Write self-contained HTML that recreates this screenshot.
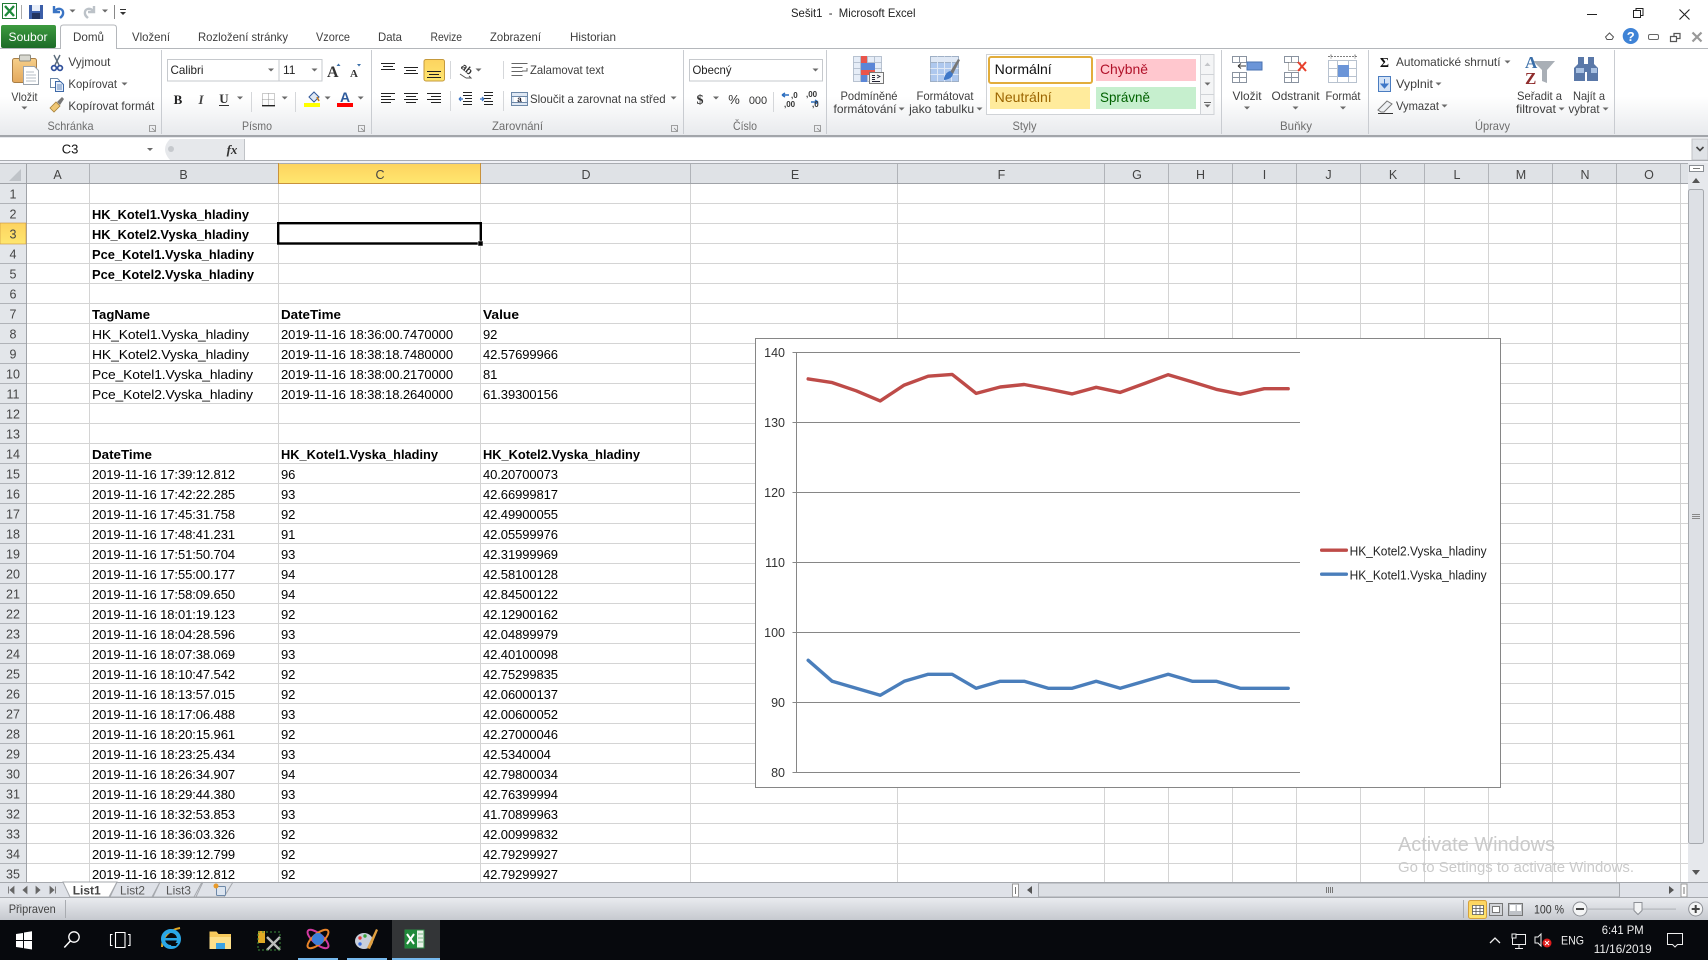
<!DOCTYPE html>
<html lang="cs"><head><meta charset="utf-8"><title>Sešit1 - Microsoft Excel</title>
<style>
html,body{margin:0;padding:0;background:#fff;width:1708px;height:960px;overflow:hidden}
svg{display:block;font-family:"Liberation Sans",sans-serif}
.u{font-size:12px;fill:#3e3e3e}
.gl{font-size:12px;fill:#6d6d6d;text-anchor:middle}
.m{text-anchor:middle}
.c{font-size:13px;fill:#000;letter-spacing:-.09px}
.b{font-size:13px;fill:#000;font-weight:bold}
.rn{font-size:12.5px;fill:#444;text-anchor:middle}
.ch{font-size:12.5px;fill:#444;text-anchor:middle}
.ax{font-size:12.5px;fill:#333;text-anchor:end}
.tb{font-size:12px;fill:#eee}
</style></head><body>
<svg width="1708" height="960" viewBox="0 0 1708 960" xmlns="http://www.w3.org/2000/svg">
<defs>
<linearGradient id="rib" x1="0" y1="0" x2="0" y2="1"><stop offset="0" stop-color="#fff"/><stop offset=".55" stop-color="#fff"/><stop offset="1" stop-color="#e8eaed"/></linearGradient>
<linearGradient id="grn" x1="0" y1="0" x2="0" y2="1"><stop offset="0" stop-color="#3d9a3f"/><stop offset="1" stop-color="#1c6b27"/></linearGradient>
<linearGradient id="gold" x1="0" y1="0" x2="0" y2="1"><stop offset="0" stop-color="#fdd35f"/><stop offset="1" stop-color="#fee66f"/></linearGradient>
<linearGradient id="stat" x1="0" y1="0" x2="0" y2="1"><stop offset="0" stop-color="#e9ebef"/><stop offset="1" stop-color="#c6c9cf"/></linearGradient>
<linearGradient id="clip" x1="0" y1="0" x2="0" y2="1"><stop offset="0" stop-color="#f6cf8a"/><stop offset="1" stop-color="#e3a85c"/></linearGradient>
<path id="ar" d="M-3-1.5h6l-3 3z" fill="#6a6a6a"/>
</defs>

<!-- title bar -->
<rect width="1708" height="48" fill="#fff"/>
<rect x="2.5" y="3.5" width="14" height="15" fill="#fff" stroke="#1f7a33"/>
<path d="M5 6l9 10M14 6l-9 10" stroke="#1f8a3a" stroke-width="2.4"/>
<rect x="21" y="5" width="1" height="14" fill="#aaa"/>
<rect x="29" y="5" width="14" height="14" fill="#3b5ea8"/><rect x="32" y="5" width="8" height="6" fill="#e8eef8"/><rect x="32" y="13" width="8" height="6" fill="#22335e"/>
<path d="M54 6v6h6M54 12c3-5 10-4 9 2-.3 2-2 3-3 4" fill="none" stroke="#3a74c4" stroke-width="2.4"/>
<use href="#ar" x="72.5" y="11"/>
<path d="M94 6v6h-6M94 12c-3-5-10-4-9 2 .3 2 2 3 3 4" fill="none" stroke="#bcc2c8" stroke-width="2.4"/>
<use href="#ar" x="105" y="11"/>
<rect x="114" y="5" width="1" height="14" fill="#888"/>
<path d="M120 9h6v1h-6zM120 12h6l-3 3z" fill="#333"/>
<text x="791" y="17" class="u" style="fill:#222;white-space:pre" textLength="124.5" lengthAdjust="spacingAndGlyphs">Sešit1  -  Microsoft Excel</text>
<rect x="1587" y="14" width="10" height="1" fill="#222"/>
<path d="M1633.5 10.5h7v7h-7zM1636 10.5v-2h7v7h-2" fill="none" stroke="#222"/>
<path d="M1679.5 9.5l10 10M1689.5 9.5l-10 10" stroke="#222" stroke-width="1.1"/>

<!-- tabs -->
<rect x="1" y="25" width="55" height="23" rx="2" fill="url(#grn)"/>
<text x="28" y="41" class="m" style="font-size:12px;fill:#fff" textLength="39" lengthAdjust="spacingAndGlyphs">Soubor</text>
<path d="M60.5 49v-21q0-3 3-3h50q3 0 3 3v21" fill="#fff" stroke="#b4b7bb"/>
<g class="u">
<text x="73" y="41" textLength="31" lengthAdjust="spacingAndGlyphs">Domů</text>
<text x="132" y="41" textLength="38" lengthAdjust="spacingAndGlyphs">Vložení</text>
<text x="198" y="41" textLength="90" lengthAdjust="spacingAndGlyphs">Rozložení stránky</text>
<text x="316" y="41" textLength="34" lengthAdjust="spacingAndGlyphs">Vzorce</text>
<text x="378" y="41" textLength="24" lengthAdjust="spacingAndGlyphs">Data</text>
<text x="430.5" y="41" textLength="31.5" lengthAdjust="spacingAndGlyphs">Revize</text>
<text x="490" y="41" textLength="51" lengthAdjust="spacingAndGlyphs">Zobrazení</text>
<text x="570" y="41" textLength="46" lengthAdjust="spacingAndGlyphs">Historian</text>
</g>
<path d="M1605.5 37l4-4 4 4-1.5 2.5h-5z" fill="none" stroke="#555"/>
<circle cx="1630.7" cy="36" r="8" fill="#3f83d6"/>
<text x="1630.7" y="41" class="m" style="font-size:13px;font-weight:bold;fill:#fff">?</text>
<rect x="1648.5" y="34.5" width="10" height="5" rx="1.5" fill="none" stroke="#666"/>
<path d="M1670.5 36.5h6v5h-6zM1674 36.5v-3h6v5h-3" fill="none" stroke="#555" stroke-width="1.2"/>
<path d="M1692.5 32.5l9 9M1701.5 32.5l-9 9" stroke="#999" stroke-width="2.2"/>

<!-- ribbon -->
<rect x="0" y="49" width="1708" height="86" fill="url(#rib)"/>
<rect x="0" y="48" width="60" height="1" fill="#b4b7bb"/><rect x="117" y="48" width="1591" height="1" fill="#b4b7bb"/>
<rect x="61" y="48" width="55" height="2" fill="#fff"/>
<g fill="#c9ccd1">
<rect x="161" y="50" width="1" height="84"/><rect x="371" y="50" width="1" height="84"/><rect x="683" y="50" width="1" height="84"/><rect x="826" y="50" width="1" height="84"/><rect x="1221" y="50" width="1" height="84"/><rect x="1368" y="50" width="1" height="84"/><rect x="1614" y="50" width="1" height="84"/>
</g>
<g class="gl">
<text x="70.5" y="130" textLength="46" lengthAdjust="spacingAndGlyphs">Schránka</text>
<text x="257" y="130" textLength="30" lengthAdjust="spacingAndGlyphs">Písmo</text>
<text x="517.5" y="130" textLength="51" lengthAdjust="spacingAndGlyphs">Zarovnání</text>
<text x="745" y="130" textLength="24" lengthAdjust="spacingAndGlyphs">Číslo</text>
<text x="1024.5" y="130" textLength="24" lengthAdjust="spacingAndGlyphs">Styly</text>
<text x="1296" y="130" textLength="32" lengthAdjust="spacingAndGlyphs">Buňky</text>
<text x="1492.5" y="130" textLength="35" lengthAdjust="spacingAndGlyphs">Úpravy</text>
</g>
<g fill="none" stroke="#888" stroke-width=".8">
<path d="M149.5 125.5h6v6h-6zM152 128l3 3"/><path d="M358.5 125.5h6v6h-6zM361 128l3 3"/><path d="M671.5 125.5h6v6h-6zM674 128l3 3"/><path d="M814.5 125.5h6v6h-6zM817 128l3 3"/>
</g>

<!-- clipboard -->
<rect x="12.5" y="58.5" width="24" height="24" rx="2" fill="url(#clip)" stroke="#a87e46"/>
<rect x="19.5" y="55" width="11" height="6" rx="1" fill="#d8d8d0" stroke="#8a8a80"/>
<path d="M23.5 66.5h11l4 4v14h-15z" fill="#fff" stroke="#9aa3ad"/>
<path d="M26 72h8M26 75h10M26 78h10M26 81h10" stroke="#b5bcc6"/>
<text x="24.4" y="101" class="u m" textLength="26" lengthAdjust="spacingAndGlyphs">Vložit</text>
<use href="#ar" x="24.4" y="108"/>
<path d="M54 55l5 10M60 55l-5 10" stroke="#5a6a7a" stroke-width="1.4"/>
<circle cx="54" cy="68" r="2.4" fill="none" stroke="#2f4f9a" stroke-width="1.7"/><circle cx="60" cy="68" r="2.4" fill="none" stroke="#2f4f9a" stroke-width="1.7"/>
<text x="68.4" y="66" class="u" textLength="42" lengthAdjust="spacingAndGlyphs">Vyjmout</text>
<path d="M50.5 78.5h7l2 2v7h-9z" fill="#fff" stroke="#6d88a8"/>
<path d="M55.5 81.5h5l3 3v7h-8z" fill="#e6eefa" stroke="#3e69a8"/>
<path d="M57 85h5M57 87h5M57 89h5" stroke="#3e69a8" stroke-width=".8"/>
<text x="68.4" y="88" class="u" textLength="48.6" lengthAdjust="spacingAndGlyphs">Kopírovat</text>
<use href="#ar" x="124.5" y="84"/>
<path d="M50 108l6-6 4 4-6 6z" fill="#efc775" stroke="#a68038" stroke-width=".8"/>
<path d="M57 102l5-5 2 2-4 6z" fill="#777"/>
<text x="68.4" y="110" class="u" textLength="86" lengthAdjust="spacingAndGlyphs">Kopírovat formát</text>

<!-- font -->
<rect x="167.5" y="59.5" width="111.5" height="21.5" fill="#fff" stroke="#c6c9cd"/>
<rect x="279" y="59.5" width="43" height="21.5" fill="#fff" stroke="#c6c9cd"/>
<text x="170.5" y="74" class="u" style="fill:#222" textLength="33" lengthAdjust="spacingAndGlyphs">Calibri</text>
<text x="283" y="74" class="u" style="fill:#222">11</text>
<use href="#ar" x="271" y="70"/><use href="#ar" x="314.5" y="70"/>
<text x="327" y="77" style="font-size:16px;font-weight:bold;fill:#333;font-family:'Liberation Serif',serif">A</text>
<path d="M336.5 66l2-2.5 2 2.5z" fill="#3a6ea8"/>
<text x="350" y="77" style="font-size:11px;font-weight:bold;fill:#333;font-family:'Liberation Serif',serif">A</text>
<path d="M357 64l2 2.5 2-2.5z" fill="#3a6ea8"/>
<text x="178" y="104" class="m" style="font-size:13px;font-weight:bold;fill:#222;font-family:'Liberation Serif',serif">B</text>
<text x="201" y="104" class="m" style="font-size:13px;font-style:italic;font-weight:bold;fill:#444;font-family:'Liberation Serif',serif">I</text>
<text x="224" y="103" class="m" style="font-size:13px;font-weight:bold;fill:#333;font-family:'Liberation Serif',serif">U</text>
<rect x="219" y="105" width="10" height="1" fill="#333"/>
<use href="#ar" x="240" y="98"/>
<rect x="251" y="92" width="1" height="20" fill="#d5d7da"/>
<path d="M262.5 93.5h12v12h-12zM268.5 93.5v12M262.5 99.5h12" fill="none" stroke="#999" stroke-dasharray="1 1"/><rect x="262" y="105" width="13" height="1.4" fill="#222"/>
<use href="#ar" x="284.7" y="98"/>
<rect x="295" y="92" width="1" height="20" fill="#d5d7da"/>
<path d="M309 97l5-5 5 5-5 5z" fill="#dfe8f4" stroke="#33599a"/><path d="M317 97l2 4" stroke="#c07a20" stroke-width="1.6" fill="none"/>
<rect x="304" y="103" width="16" height="4" fill="#ff0"/>
<text x="345" y="102" class="m" style="font-size:14px;font-weight:bold;fill:#2d5a9c">A</text>
<rect x="337" y="103" width="16" height="4" fill="#f00"/>
<use href="#ar" x="327.6" y="98"/><use href="#ar" x="360.7" y="98"/>

<!-- alignment -->
<g stroke="#222" stroke-width="1">
<path d="M381 63.5h14M383 66.5h10M381 69.5h14"/>
<path d="M404 67.5h14M406 70.5h10M404 73.5h14"/>
<rect x="424" y="59.5" width="20.5" height="21.5" rx="2" fill="url(#gold)" stroke="#c59a3c"/>
<path d="M427 71.5h14M429 74.5h10M427 77.5h14"/>
<path d="M381 93.5h14M381 96.5h10M381 99.5h14M381 102.5h10"/>
<path d="M404 93.5h14M406 96.5h10M404 99.5h14M406 102.5h10"/>
<path d="M427 93.5h14M431 96.5h10M427 99.5h14M431 102.5h10"/>
<path d="M463 95.5h9M465 98.5h7M463 101.5h9M463 104.5h9M463 92.5h9"/>
<path d="M484 95.5h9M484 98.5h7M484 101.5h9M484 104.5h9M484 92.5h9"/>
</g>
<path d="M459 99h4M459 99l2-2M459 99l2 2" stroke="#3a74c4" stroke-width="1.2" fill="none"/>
<path d="M484 99h-4M484 99l-2-2M484 99l-2 2" stroke="#3a74c4" stroke-width="1.2" fill="none"/>
<rect x="450" y="61" width="1" height="18" fill="#d5d7da"/><rect x="450" y="91" width="1" height="20" fill="#d5d7da"/>
<text x="466" y="72" class="m" transform="rotate(40 466 70)" style="font-size:10px;font-weight:bold;fill:#333">ab</text>
<path d="M460 74l6 4M466 78h5l-2-2" stroke="#555" fill="none"/>
<use href="#ar" x="478.5" y="70"/>
<rect x="503" y="61" width="1" height="18" fill="#d5d7da"/><rect x="503" y="91" width="1" height="20" fill="#d5d7da"/>
<path d="M511.5 63.5h16M511.5 67.5h11M511.5 71.5h11M511.5 75.5h11M522 71h5v-3" fill="none" stroke="#666"/>
<text x="530" y="74" class="u" textLength="74" lengthAdjust="spacingAndGlyphs">Zalamovat text</text>
<rect x="511.5" y="92.5" width="16" height="13" fill="#dfe8f4" stroke="#6d88a8"/><path d="M511.5 96.5h16M511.5 102.5h16" stroke="#6d88a8"/><rect x="514" y="97" width="11" height="5" fill="#fff"/><text x="519.5" y="102" class="m" style="font-size:8px;font-weight:bold;fill:#223">a</text>
<text x="530" y="103" class="u" textLength="135.6" lengthAdjust="spacingAndGlyphs">Sloučit a zarovnat na střed</text>
<use href="#ar" x="673.6" y="98"/>

<!-- number -->
<rect x="689.5" y="59.5" width="133" height="21.5" fill="#fff" stroke="#c6c9cd"/>
<text x="692.5" y="74" class="u" style="fill:#222" textLength="39" lengthAdjust="spacingAndGlyphs">Obecný</text>
<use href="#ar" x="815.5" y="70"/>
<text x="700" y="104" class="m" style="font-size:14px;font-weight:bold;fill:#333;font-family:'Liberation Serif',serif">$</text>
<use href="#ar" x="716" y="98"/>
<text x="734" y="104" class="m" style="font-size:13px;fill:#333">%</text>
<text x="758" y="104" class="m" style="font-size:11px;fill:#333">000</text>
<rect x="773" y="92" width="1" height="20" fill="#d5d7da"/>
<path d="M782 95h7M782 95l3-2M782 95l3 2" stroke="#2d6fc0" stroke-width="1.4" fill="none"/>
<text x="791" y="98" style="font-size:8px;fill:#333;font-weight:bold">,0</text><text x="784" y="107" style="font-size:8px;fill:#333;font-weight:bold">,00</text>
<path d="M811 102h7M818 102l-3-2M818 102l-3 2" stroke="#2d6fc0" stroke-width="1.4" fill="none"/>
<text x="806" y="97" style="font-size:8px;fill:#333;font-weight:bold">,00</text><text x="812" y="107" style="font-size:8px;fill:#333;font-weight:bold">,0</text>

<!-- conditional format / table -->
<g stroke="#a9b5c6" stroke-width=".8">
<rect x="853.5" y="56.5" width="28" height="25" fill="#e6edf7"/>
<path d="M860.5 56.5v25M867.5 56.5v25M874.5 56.5v25M853.5 62.5h28M853.5 68.5h28M853.5 74.5h28" fill="none"/>
</g>
<rect x="861" y="56" width="6" height="7" fill="#e9554b"/><rect x="861" y="63" width="14" height="7" fill="#5b86d6"/><rect x="861" y="70" width="14" height="5" fill="#e9554b"/><rect x="861" y="75" width="6" height="7" fill="#5b86d6"/>
<rect x="869.5" y="72.5" width="14" height="11" fill="#f7f7f7" stroke="#777"/>
<path d="M872 75.5h3M872 77.5h3M872 79.5h3M872 81.5h8M877 75l3 1.5-3 1.5" stroke="#223" fill="none" stroke-width=".9"/>
<g class="u m">
<text x="869" y="100" textLength="57" lengthAdjust="spacingAndGlyphs">Podmíněné</text>
<text x="865" y="113" textLength="63" lengthAdjust="spacingAndGlyphs">formátování</text>
<text x="945" y="100" textLength="57" lengthAdjust="spacingAndGlyphs">Formátovat</text>
<text x="941.6" y="113" textLength="65" lengthAdjust="spacingAndGlyphs">jako tabulku</text>
</g>
<use href="#ar" x="901.6" y="109"/><use href="#ar" x="979.5" y="109"/>
<rect x="930.5" y="56.5" width="28" height="25" fill="#aec8ee" stroke="#9fb0c6"/>
<rect x="930.5" y="56.5" width="28" height="6" fill="#dfe8f5" stroke="#9fb0c6"/>
<path d="M937.5 56.5v25M944.5 56.5v25M951.5 56.5v25M930.5 68.5h28M930.5 74.5h28" stroke="#dfe8f5" fill="none"/>
<path d="M950 72l8-13 2 1-7 14z" fill="#777"/><path d="M944 78q2-6 6-7l3 3q-1 5-9 6z" fill="#3f78c8"/>

<!-- styles -->
<rect x="986.5" y="54.5" width="227" height="60" fill="#fff" stroke="#d0d3d7"/>
<rect x="989" y="57" width="103" height="26" rx="2" fill="#fff" stroke="#e2ad3c" stroke-width="2"/>
<rect x="1096" y="59" width="100" height="22" fill="#ffc7ce"/>
<rect x="990" y="87" width="100" height="22" fill="#ffeb9c"/>
<rect x="1096" y="87" width="100" height="22" fill="#c6efce"/>
<g style="font-size:14px">
<text x="994.7" y="74" fill="#111" textLength="57" lengthAdjust="spacingAndGlyphs">Normální</text>
<text x="1100" y="74" fill="#b1122a" textLength="48" lengthAdjust="spacingAndGlyphs">Chybně</text>
<text x="994.7" y="102" fill="#9c6500" textLength="57" lengthAdjust="spacingAndGlyphs">Neutrální</text>
<text x="1100" y="102" fill="#006100" textLength="50" lengthAdjust="spacingAndGlyphs">Správně</text>
</g>
<rect x="1200.5" y="54.5" width="13.5" height="20" fill="#f4f5f6" stroke="#d0d3d7"/><rect x="1200.5" y="74.5" width="13.5" height="20" fill="#f4f5f6" stroke="#d0d3d7"/><rect x="1200.5" y="94.5" width="13.5" height="20" fill="#f4f5f6" stroke="#d0d3d7"/>
<path d="M1204.5 66l3-3.5 3 3.5z" fill="#c4c6c9"/><use href="#ar" x="1207.5" y="84"/><rect x="1204" y="102" width="7" height="1" fill="#666"/><use href="#ar" x="1207.5" y="106"/>

<!-- cells -->
<g fill="none" stroke="#8a93a0">
<path d="M1232.5 56.5h14v6h-14zM1239.5 56.5v6M1232.5 72.5h14v10h-14zM1239.5 72.5v10M1232.5 77.5h14"/>
<path d="M1284.5 56.5h14v6h-14zM1291.5 56.5v6M1284.5 72.5h14v10h-14zM1291.5 72.5v10M1284.5 77.5h14"/>
<path d="M1328.5 60.5h28v22h-28zM1337.5 60.5v22M1348.5 60.5v22M1328.5 68.5h28M1328.5 76.5h28" stroke="#b8c2cf"/>
</g>
<path d="M1238 66h8M1238 66l3-2.5M1238 66l3 2.5" fill="none" stroke="#333"/>
<rect x="1247" y="62" width="15" height="8" fill="#6b95d8" stroke="#4a72b0"/>
<rect x="1288.5" y="62.5" width="12" height="8" fill="#fff" stroke="#777" stroke-dasharray="1 1"/>
<path d="M1298 62l8 9M1306 62l-8 9" stroke="#e8402c" stroke-width="2"/>
<rect x="1338" y="65" width="11" height="12" fill="#6b95d8"/>
<path d="M1328 56.5h30M1331 54.5v4M1355 54.5v4" stroke="#555" stroke-width=".8" stroke-dasharray="2 1"/>
<g class="u m">
<text x="1247" y="100" textLength="29" lengthAdjust="spacingAndGlyphs">Vložit</text>
<text x="1295.5" y="100" textLength="48" lengthAdjust="spacingAndGlyphs">Odstranit</text>
<text x="1343" y="100" textLength="35" lengthAdjust="spacingAndGlyphs">Formát</text>
</g>
<use href="#ar" x="1247" y="108"/><use href="#ar" x="1295.5" y="108"/><use href="#ar" x="1343" y="108"/>

<!-- editing -->
<text x="1384.5" y="67" class="m" style="font-size:14px;font-weight:bold;fill:#111;font-family:'Liberation Serif',serif">Σ</text>
<text x="1396" y="66" class="u" textLength="104.5" lengthAdjust="spacingAndGlyphs">Automatické shrnutí</text>
<use href="#ar" x="1507.5" y="62"/>
<rect x="1378.5" y="76.5" width="12" height="15" fill="#d4e3f6" stroke="#4a7cc0"/>
<path d="M1384.5 79v8M1381 84l3.500 4 3.500-4z" fill="#3f78c8" stroke="#3f78c8"/>
<text x="1396" y="88" class="u" textLength="37" lengthAdjust="spacingAndGlyphs">Vyplnit</text>
<use href="#ar" x="1438.5" y="84"/>
<path d="M1378 110l9-9 5 3-8 8h-3z" fill="#eef0f3" stroke="#777"/><rect x="1378" y="113" width="15" height="1" fill="#333"/>
<text x="1396" y="110" class="u" textLength="43" lengthAdjust="spacingAndGlyphs">Vymazat</text>
<use href="#ar" x="1444.5" y="106"/>
<path d="M1533 61h22l-8 9v13l-5-2v-11z" fill="#a9afb6"/>
<text x="1525" y="68" style="font-size:17px;font-weight:bold;fill:#3a6ea8;font-family:'Liberation Serif',serif">A</text>
<text x="1525" y="84" style="font-size:17px;font-weight:bold;fill:#8f2c2c;font-family:'Liberation Serif',serif">Z</text>
<g class="u m">
<text x="1539.5" y="100" textLength="45" lengthAdjust="spacingAndGlyphs">Seřadit a</text>
<text x="1536" y="113" textLength="40" lengthAdjust="spacingAndGlyphs">filtrovat</text>
<text x="1589" y="100" textLength="32" lengthAdjust="spacingAndGlyphs">Najít a</text>
<text x="1584" y="113" textLength="31" lengthAdjust="spacingAndGlyphs">vybrat</text>
</g>
<use href="#ar" x="1561.6" y="109"/><use href="#ar" x="1605.6" y="109"/>
<path d="M1578 57h6v7h4v-7h6v7l4 4v13h-11v-9h-2v9h-11v-13l4-4z" fill="#5a78a8"/><path d="M1576 68h8v5h-8zM1591 68h6v5h-6z" fill="#a9c1e2"/>

<!-- formula bar -->
<rect x="0" y="135" width="1708" height="2" fill="#a2a5aa"/>
<rect x="0" y="137" width="1708" height="1" fill="#e6e8ec"/>
<rect x="0" y="138" width="1708" height="22" fill="#fff"/>
<rect x="160" y="139" width="85" height="21" fill="#e6e8eb"/>
<path d="M170 139q-10 10 0 21h-10v-21z" fill="#fff"/>
<circle cx="171" cy="149" r="3" fill="#c6c9cd"/>
<text x="70" y="153.5" class="m" style="font-size:13px;fill:#111">C3</text>
<use href="#ar" x="150" y="149.5"/>
<text x="232" y="154" class="m" style="font-size:13px;font-style:italic;font-weight:bold;fill:#333;font-family:'Liberation Serif',serif">fx</text>
<rect x="244" y="139" width="1" height="21" fill="#c0c3c7"/>
<rect x="1692" y="139" width="16" height="21" fill="#dfe2e6" stroke="#c0c3c7"/>
<path d="M1696.5 147l3.500 3.500 3.500-3.500" stroke="#444" stroke-width="1.6" fill="none"/>
<rect x="0" y="160" width="1708" height="1" fill="#a9acb1"/>
<rect x="0" y="161" width="1708" height="2" fill="#f0f1f6"/>
<rect x="0" y="163" width="1708" height="1" fill="#a9acb1"/>

<!-- sheet -->
<rect x="26" y="184" width="1662" height="698" fill="#fff"/>
<path fill="none" stroke="#d4d4d4" d="M26 203.5H1688M26 223.5H1688M26 243.5H1688M26 263.5H1688M26 283.5H1688M26 303.5H1688M26 323.5H1688M26 343.5H1688M26 363.5H1688M26 383.5H1688M26 403.5H1688M26 423.5H1688M26 443.5H1688M26 463.5H1688M26 483.5H1688M26 503.5H1688M26 523.5H1688M26 543.5H1688M26 563.5H1688M26 583.5H1688M26 603.5H1688M26 623.5H1688M26 643.5H1688M26 663.5H1688M26 683.5H1688M26 703.5H1688M26 723.5H1688M26 743.5H1688M26 763.5H1688M26 783.5H1688M26 803.5H1688M26 823.5H1688M26 843.5H1688M26 863.5H1688M89.5 184V882M278.5 184V882M480.5 184V882M690.5 184V882M897.5 184V882M1104.5 184V882M1168.5 184V882M1232.5 184V882M1296.5 184V882M1360.5 184V882M1424.5 184V882M1488.5 184V882M1552.5 184V882M1616.5 184V882M1680.5 184V882"/>
<!-- headers -->
<rect x="0" y="164" width="1688" height="19" fill="#dfe2e6"/>
<rect x="0" y="183" width="26" height="699" fill="#e3e6ea"/>
<rect x="278" y="164" width="203" height="19" fill="url(#gold)"/>
<rect x="278" y="163" width="1" height="21" fill="#c8923c"/><rect x="480" y="163" width="1" height="21" fill="#c8923c"/>
<rect x="0" y="183" width="1688" height="1" fill="#a0a3a8"/><rect x="278" y="183" width="203" height="1" fill="#c8923c"/>
<rect x="26" y="164" width="1" height="718" fill="#a0a3a8"/>
<path fill="none" stroke="#b0b3b8" d="M89.5 164v19M690.5 164v19M897.5 164v19M1104.5 164v19M1168.5 164v19M1232.5 164v19M1296.5 164v19M1360.5 164v19M1424.5 164v19M1488.5 164v19M1552.5 164v19M1616.5 164v19M1680.5 164v19M0 203.5h26M0 223.5h26M0 243.5h26M0 263.5h26M0 283.5h26M0 303.5h26M0 323.5h26M0 343.5h26M0 363.5h26M0 383.5h26M0 403.5h26M0 423.5h26M0 443.5h26M0 463.5h26M0 483.5h26M0 503.5h26M0 523.5h26M0 543.5h26M0 563.5h26M0 583.5h26M0 603.5h26M0 623.5h26M0 643.5h26M0 663.5h26M0 683.5h26M0 703.5h26M0 723.5h26M0 743.5h26M0 763.5h26M0 783.5h26M0 803.5h26M0 823.5h26M0 843.5h26M0 863.5h26"/>
<path d="M21 169v12h-12z" fill="#bfc3c8"/>
<rect x="0" y="223" width="26" height="21" fill="url(#gold)" stroke="#c8923c" stroke-width=".6"/>
<g class="ch">
<text x="57.5" y="179">A</text><text x="183.5" y="179">B</text><text x="380" y="179">C</text><text x="586" y="179">D</text><text x="795" y="179">E</text><text x="1001.5" y="179">F</text><text x="1137" y="179">G</text><text x="1200.5" y="179">H</text><text x="1264.5" y="179">I</text><text x="1328.5" y="179">J</text><text x="1393" y="179">K</text><text x="1457" y="179">L</text><text x="1521" y="179">M</text><text x="1585" y="179">N</text><text x="1649" y="179">O</text>
</g>
<g class="rn">
<text x="13" y="198.5">1</text><text x="13" y="218.5">2</text><text x="13" y="238.5">3</text><text x="13" y="258.5">4</text><text x="13" y="278.5">5</text><text x="13" y="298.5">6</text><text x="13" y="318.5">7</text><text x="13" y="338.5">8</text><text x="13" y="358.5">9</text><text x="13" y="378.5">10</text><text x="13" y="398.5">11</text><text x="13" y="418.5">12</text><text x="13" y="438.5">13</text><text x="13" y="458.5">14</text><text x="13" y="478.5">15</text><text x="13" y="498.5">16</text><text x="13" y="518.5">17</text><text x="13" y="538.5">18</text><text x="13" y="558.5">19</text><text x="13" y="578.5">20</text><text x="13" y="598.5">21</text><text x="13" y="618.5">22</text><text x="13" y="638.5">23</text><text x="13" y="658.5">24</text><text x="13" y="678.5">25</text><text x="13" y="698.5">26</text><text x="13" y="718.5">27</text><text x="13" y="738.5">28</text><text x="13" y="758.5">29</text><text x="13" y="778.5">30</text><text x="13" y="798.5">31</text><text x="13" y="818.5">32</text><text x="13" y="838.5">33</text><text x="13" y="858.5">34</text><text x="13" y="878.5">35</text>
</g>
<!-- cell text -->
<g class="b">
<text x="92" y="219" textLength="157" lengthAdjust="spacingAndGlyphs">HK_Kotel1.Vyska_hladiny</text>
<text x="92" y="239" textLength="157" lengthAdjust="spacingAndGlyphs">HK_Kotel2.Vyska_hladiny</text>
<text x="92" y="259" textLength="162" lengthAdjust="spacingAndGlyphs">Pce_Kotel1.Vyska_hladiny</text>
<text x="92" y="279" textLength="162" lengthAdjust="spacingAndGlyphs">Pce_Kotel2.Vyska_hladiny</text>
<text x="92" y="319" textLength="58" lengthAdjust="spacingAndGlyphs">TagName</text>
<text x="281" y="319" textLength="60" lengthAdjust="spacingAndGlyphs">DateTime</text>
<text x="483" y="319" textLength="36" lengthAdjust="spacingAndGlyphs">Value</text>
<text x="92" y="459" textLength="60" lengthAdjust="spacingAndGlyphs">DateTime</text>
<text x="281" y="459" textLength="157" lengthAdjust="spacingAndGlyphs">HK_Kotel1.Vyska_hladiny</text>
<text x="483" y="459" textLength="157" lengthAdjust="spacingAndGlyphs">HK_Kotel2.Vyska_hladiny</text>
</g>
<g class="c">
<text x="92" y="339" textLength="157" lengthAdjust="spacingAndGlyphs">HK_Kotel1.Vyska_hladiny</text><text x="281" y="339" textLength="172" lengthAdjust="spacingAndGlyphs">2019-11-16 18:36:00.7470000</text><text x="483" y="339">92</text>
<text x="92" y="359" textLength="157" lengthAdjust="spacingAndGlyphs">HK_Kotel2.Vyska_hladiny</text><text x="281" y="359" textLength="172" lengthAdjust="spacingAndGlyphs">2019-11-16 18:38:18.7480000</text><text x="483" y="359">42.57699966</text>
<text x="92" y="379" textLength="161" lengthAdjust="spacingAndGlyphs">Pce_Kotel1.Vyska_hladiny</text><text x="281" y="379" textLength="172" lengthAdjust="spacingAndGlyphs">2019-11-16 18:38:00.2170000</text><text x="483" y="379">81</text>
<text x="92" y="399" textLength="161" lengthAdjust="spacingAndGlyphs">Pce_Kotel2.Vyska_hladiny</text><text x="281" y="399" textLength="172" lengthAdjust="spacingAndGlyphs">2019-11-16 18:38:18.2640000</text><text x="483" y="399">61.39300156</text>
<text x="92" y="479">2019-11-16 17:39:12.812</text><text x="281" y="479">96</text><text x="483" y="479">40.20700073</text>
<text x="92" y="499">2019-11-16 17:42:22.285</text><text x="281" y="499">93</text><text x="483" y="499">42.66999817</text>
<text x="92" y="519">2019-11-16 17:45:31.758</text><text x="281" y="519">92</text><text x="483" y="519">42.49900055</text>
<text x="92" y="539">2019-11-16 17:48:41.231</text><text x="281" y="539">91</text><text x="483" y="539">42.05599976</text>
<text x="92" y="559">2019-11-16 17:51:50.704</text><text x="281" y="559">93</text><text x="483" y="559">42.31999969</text>
<text x="92" y="579">2019-11-16 17:55:00.177</text><text x="281" y="579">94</text><text x="483" y="579">42.58100128</text>
<text x="92" y="599">2019-11-16 17:58:09.650</text><text x="281" y="599">94</text><text x="483" y="599">42.84500122</text>
<text x="92" y="619">2019-11-16 18:01:19.123</text><text x="281" y="619">92</text><text x="483" y="619">42.12900162</text>
<text x="92" y="639">2019-11-16 18:04:28.596</text><text x="281" y="639">93</text><text x="483" y="639">42.04899979</text>
<text x="92" y="659">2019-11-16 18:07:38.069</text><text x="281" y="659">93</text><text x="483" y="659">42.40100098</text>
<text x="92" y="679">2019-11-16 18:10:47.542</text><text x="281" y="679">92</text><text x="483" y="679">42.75299835</text>
<text x="92" y="699">2019-11-16 18:13:57.015</text><text x="281" y="699">92</text><text x="483" y="699">42.06000137</text>
<text x="92" y="719">2019-11-16 18:17:06.488</text><text x="281" y="719">93</text><text x="483" y="719">42.00600052</text>
<text x="92" y="739">2019-11-16 18:20:15.961</text><text x="281" y="739">92</text><text x="483" y="739">42.27000046</text>
<text x="92" y="759">2019-11-16 18:23:25.434</text><text x="281" y="759">93</text><text x="483" y="759">42.5340004</text>
<text x="92" y="779">2019-11-16 18:26:34.907</text><text x="281" y="779">94</text><text x="483" y="779">42.79800034</text>
<text x="92" y="799">2019-11-16 18:29:44.380</text><text x="281" y="799">93</text><text x="483" y="799">42.76399994</text>
<text x="92" y="819">2019-11-16 18:32:53.853</text><text x="281" y="819">93</text><text x="483" y="819">41.70899963</text>
<text x="92" y="839">2019-11-16 18:36:03.326</text><text x="281" y="839">92</text><text x="483" y="839">42.00999832</text>
<text x="92" y="859">2019-11-16 18:39:12.799</text><text x="281" y="859">92</text><text x="483" y="859">42.79299927</text>
<text x="92" y="879">2019-11-16 18:39:12.812</text><text x="281" y="879">92</text><text x="483" y="879">42.79299927</text>
</g>
<!-- selection -->
<rect x="278.2" y="223.2" width="202.6" height="20.3" fill="#fff" stroke="#000" stroke-width="2.4"/>
<rect x="478" y="241" width="5" height="5" fill="#000" stroke="#fff" stroke-width=".5"/>

<!-- chart -->
<rect x="755.5" y="338.5" width="745" height="449" fill="#fff" stroke="#868686"/>
<path d="M792.5 352.5H1300M792.5 422.5H1300M792.5 492.5H1300M792.5 562.5H1300M792.5 632.5H1300M792.5 702.5H1300M792.5 772.5H1300M796.5 352V773" fill="none" stroke="#868686"/>
<g class="ax">
<text x="785" y="357">140</text><text x="785" y="427">130</text><text x="785" y="497">120</text><text x="785" y="567">110</text><text x="785" y="637">100</text><text x="785" y="707">90</text><text x="785" y="777">80</text>
</g>
<polyline fill="none" stroke="#be4b48" stroke-width="3.4" stroke-linejoin="round" stroke-linecap="round" points="808.2,378.9 832.2,382.6 856.2,390.8 880.2,400.9 904.2,385.1 928.2,376.2 952.2,374.4 976.2,393.4 1000.2,387 1024.2,384.5 1048.2,389 1072.2,393.9 1096.2,387.3 1120.2,392.4 1144.2,383.6 1168.2,374.7 1192.2,381.9 1216.2,389.3 1240.2,394.2 1264.2,388.7 1288.2,388.7"/>
<polyline fill="none" stroke="#4a7ebb" stroke-width="3.4" stroke-linejoin="round" stroke-linecap="round" points="808.2,660.3 832.2,681.3 856.2,688.3 880.2,695.3 904.2,681.3 928.2,674.3 952.2,674.3 976.2,688.3 1000.2,681.3 1024.2,681.3 1048.2,688.3 1072.2,688.3 1096.2,681.3 1120.2,688.3 1144.2,681.3 1168.2,674.3 1192.2,681.3 1216.2,681.3 1240.2,688.3 1264.2,688.3 1288.2,688.3"/>
<rect x="1320" y="548.5" width="28" height="3.4" rx="1.5" fill="#be4b48"/>
<rect x="1320" y="572.5" width="28" height="3.4" rx="1.5" fill="#4a7ebb"/>
<text x="1349.6" y="555.5" style="font-size:13px;fill:#222" textLength="137" lengthAdjust="spacingAndGlyphs">HK_Kotel2.Vyska_hladiny</text>
<text x="1349.6" y="579.5" style="font-size:13px;fill:#222" textLength="137" lengthAdjust="spacingAndGlyphs">HK_Kotel1.Vyska_hladiny</text>

<!-- activate windows -->
<text x="1398" y="851" style="font-size:20px;fill:#cacaca" textLength="157" lengthAdjust="spacingAndGlyphs">Activate Windows</text>
<text x="1398" y="872" style="font-size:15px;fill:#cacaca" textLength="236" lengthAdjust="spacingAndGlyphs">Go to Settings to activate Windows.</text>

<!-- v scrollbar -->
<rect x="1688" y="163" width="20" height="719" fill="#e6e8ec"/>
<rect x="1689.5" y="165.5" width="14" height="6" fill="#fff" stroke="#8a8e94"/><rect x="1693" y="168" width="7" height="1" fill="#777"/>
<path d="M1692 183l4-5 4 5z" fill="#555"/>
<rect x="1688.5" y="189.5" width="15" height="654" rx="2" fill="#dde0e5" stroke="#a6a9ae"/>
<path d="M1692 514.5h8M1692 516.5h8M1692 518.5h8" stroke="#888"/>
<path d="M1692 870h8l-4 5z" fill="#555"/>

<!-- sheet tabs / h scrollbar -->
<rect x="0" y="882" width="1708" height="17" fill="#dfe2e8"/>
<rect x="0" y="882" width="1708" height="1" fill="#a6a9ae"/>
<path d="M8.5 886.5v7M14 886.5l-4 3.500 4 3.500zM27 886.5l-4 3.500 4 3.500zM36 886.5l4 3.500-4 3.500zM50 886.5l4 3.500-4 3.500zM55.5 886.5v7" fill="#666" stroke="#666" stroke-width=".8"/>
<path d="M63 882h54l-7 15H70z" fill="#fff" stroke="#a6a9ae"/>
<path d="M117 882l-8 15h44l7-15M160 882l-8 15h44l7-15M202 882l-8 15h30l9-15" fill="none" stroke="#a6a9ae"/>
<text x="72.7" y="894.5" style="font-size:12px;font-weight:bold;fill:#444" textLength="28" lengthAdjust="spacingAndGlyphs">List1</text>
<text x="120" y="894.5" style="font-size:12px;fill:#555" textLength="25" lengthAdjust="spacingAndGlyphs">List2</text>
<text x="166" y="894.5" style="font-size:12px;fill:#555" textLength="25" lengthAdjust="spacingAndGlyphs">List3</text>
<rect x="216.5" y="886.5" width="9" height="9" rx="1" fill="#dce5f0" stroke="#6d88a8"/><circle cx="216" cy="886" r="2.5" fill="#e89a2a"/>
<rect x="1012.5" y="884" width="6" height="13" fill="#fff" stroke="#999"/><rect x="1015" y="887" width="1" height="7" fill="#777"/>
<path d="M1032 886v8l-5-4z" fill="#555"/>
<rect x="1038.5" y="883" width="581" height="14" rx="1" fill="#dcdfe4" stroke="#a6a9ae"/>
<path d="M1326.5 887v6M1328.5 887v6M1330.5 887v6M1332.5 887v6" stroke="#777"/>
<path d="M1669 886v8l5-4z" fill="#555"/>
<rect x="1681" y="884" width="6" height="13" fill="#fff" stroke="#999"/><rect x="1683.5" y="887" width="1" height="7" fill="#777"/>
<rect x="0" y="897" width="1708" height="1" fill="#a6a9ae"/>

<!-- status bar -->
<rect x="0" y="898" width="1708" height="22" fill="url(#stat)"/>
<text x="8.7" y="913" style="font-size:12px;fill:#444" textLength="47" lengthAdjust="spacingAndGlyphs">Připraven</text>
<rect x="65" y="900" width="1" height="18" fill="#a9acb1"/>
<rect x="1463" y="900" width="1" height="18" fill="#a9acb1"/>
<rect x="1468.5" y="900.5" width="18" height="18" rx="2" fill="url(#gold)" stroke="#d6a13c"/>
<path d="M1472.5 905.5h11v9h-11zM1472.5 908.5h11M1472.5 911.5h11M1476 905.5v9M1480 905.5v9" fill="#fff" stroke="#555" stroke-width=".8"/>
<rect x="1489.5" y="903.5" width="13" height="12" fill="#d2d4d8" stroke="#777"/><rect x="1492.5" y="906.5" width="7" height="6" fill="#fff" stroke="#777"/>
<path d="M1508.5 903.5h14v12h-14z" fill="#bfc2c7" stroke="#777"/><rect x="1510" y="905" width="5.5" height="6" fill="#fff"/><rect x="1517" y="905" width="4" height="6" fill="#fff"/>
<text x="1534" y="913.5" style="font-size:12px;fill:#333" textLength="30" lengthAdjust="spacingAndGlyphs">100 %</text>
<rect x="1588" y="908.5" width="88" height="1.2" fill="#b4b7bb"/>
<circle cx="1580" cy="909" r="7" fill="#f4f5f6" stroke="#8d9096"/><rect x="1576" y="908" width="8" height="2" fill="#444"/>
<circle cx="1695.7" cy="909" r="7" fill="#f4f5f6" stroke="#8d9096"/><path d="M1691.7 908h8v2h-8zM1694.7 905h2v8h-2z" fill="#444"/>
<path d="M1634 902.5h8v8l-4 4-4-4z" fill="#f2f3f4" stroke="#8d9096"/>

<!-- taskbar -->
<rect x="0" y="920" width="1708" height="40" fill="#07090d"/>
<path d="M16 934l7-1v7h-7zM24 932.500l8-1.200V940h-8zM16 941h7v7l-7-1zM24 941h8v8.500l-8-1.200z" fill="#fff"/>
<circle cx="74" cy="937" r="5.2" fill="none" stroke="#fff" stroke-width="1.3"/><path d="M70.300 941l-6 6.500" stroke="#fff" stroke-width="1.5"/>
<path d="M115.5 932.5h9.500v15h-9.500zM112.5 934.5h-2v11h2M128 934.5h2v11h-2" fill="none" stroke="#fff" stroke-width="1.1"/>
<path d="M162 947c0-10 7-17 18-19" fill="none" stroke="#e0a825" stroke-width="2"/>
<circle cx="171" cy="939" r="8" fill="none" stroke="#2aa7e6" stroke-width="4"/><rect x="165" y="938" width="12" height="2.5" fill="#2aa7e6"/><path d="M172 943h6l-2 3h-5z" fill="#07090d"/>
<path d="M209.5 931.5h7l2 2.500h12.500v15h-21.500z" fill="#f6c95c"/><rect x="209.5" y="937" width="21.5" height="12" fill="#fde08a"/><path d="M216 943h9v6h-9z" fill="#3aa3e3"/>
<rect x="258" y="931" width="7" height="12" fill="#e0a825"/><path d="M267 937l13 13M280 937l-13 13" stroke="#bbb" stroke-width="2.4"/><path d="M258 932h22v18h-22z" fill="none" stroke="#3c8d3a" stroke-dasharray="2 2"/>
<ellipse cx="318" cy="939" rx="13" ry="5" transform="rotate(40 318 939)" fill="none" stroke="#d33aa0" stroke-width="2"/><ellipse cx="318" cy="939" rx="13" ry="5" transform="rotate(-40 318 939)" fill="none" stroke="#e8842a" stroke-width="2"/><circle cx="318" cy="939" r="6" fill="#3a7fd8"/>
<ellipse cx="364" cy="941" rx="9" ry="8" fill="#c8d0dc"/><circle cx="360" cy="938" r="1.7" fill="#e23a3a"/><circle cx="365" cy="936" r="1.7" fill="#3aa33a"/><circle cx="360" cy="944" r="1.7" fill="#3a6fe2"/><path d="M367 948l9-19 2 1-8 19z" fill="#e0a040"/>
<rect x="392" y="920" width="48" height="40" fill="#333537"/>
<rect x="298" y="958" width="40" height="2" fill="#76b9ed"/><rect x="347" y="958" width="40" height="2" fill="#76b9ed"/><rect x="392" y="958" width="48" height="2" fill="#76b9ed"/>
<rect x="405" y="930" width="19" height="18" fill="#e8f2e8" stroke="#2e8a44"/>
<path d="M418 934h5M418 938h5M418 942h5" stroke="#7db88a"/>
<rect x="405" y="930" width="12" height="18" fill="#1f8a3a"/>
<path d="M407 934l7 10M414 934l-7 10" stroke="#fff" stroke-width="2"/>
<path d="M1490 943l5-5 5 5" fill="none" stroke="#eee" stroke-width="1.3"/>
<path d="M1512.5 934.5h13v10h-13zM1519 944.5v4M1515 948.5h8" fill="none" stroke="#eee"/><rect x="1512" y="934" width="4" height="4" fill="#07090d" stroke="#eee"/>
<path d="M1535 937h3l3-3v12l-3-3h-3z" fill="none" stroke="#eee"/>
<circle cx="1547" cy="943" r="4.5" fill="#e01c1c"/><path d="M1545 941l4 4M1549 941l-4 4" stroke="#fff"/>
<text x="1561" y="944.5" class="tb" textLength="23" lengthAdjust="spacingAndGlyphs">ENG</text>
<text x="1622.7" y="934" class="tb m" textLength="42" lengthAdjust="spacingAndGlyphs">6:41 PM</text>
<text x="1622.7" y="953" class="tb m" textLength="58" lengthAdjust="spacingAndGlyphs">11/16/2019</text>
<path d="M1667.5 933.5h15v11h-5l-2.500 2.500-2.500-2.500h-5z" fill="none" stroke="#eee"/>
</svg>
</body></html>
